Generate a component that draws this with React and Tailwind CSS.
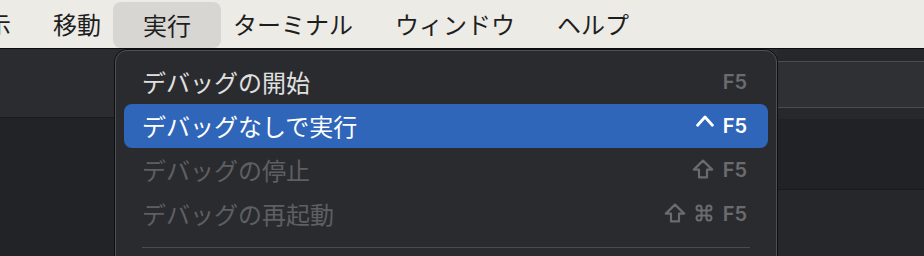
import React from 'react';

const FONT = { fontFamily: '"Noto Sans CJK JP", "Noto Sans", sans-serif' };

const BAR_ITEMS = ['表示', '移動', '実行', 'ターミナル', 'ウィンドウ', 'ヘルプ'];

const ShiftIcon = () => (
  <svg width="22" height="20" viewBox="0 0 22 20" fill="none" stroke="currentColor" strokeWidth="2.2" strokeLinejoin="round" className="mb-[3px]">
    <path d="M11 1.6 L20.2 10.6 H15 V18.4 H7 V10.6 H1.8 Z" />
  </svg>
);

const ControlIcon = () => (
  <svg width="18" height="12" viewBox="0 0 18 12" fill="none" stroke="currentColor" strokeWidth="2.8" strokeLinecap="round" strokeLinejoin="round" className="mb-[11px]">
    <polyline points="1.6,10.2 9,2 16.4,10.2" />
  </svg>
);

const CommandIcon = () => (
  <svg width="20" height="20" viewBox="0 0 24 24" fill="none" stroke="currentColor" strokeWidth="2.4" strokeLinecap="round" strokeLinejoin="round" className="mb-[3px]">
    <path d="M15 6v12a3 3 0 1 0 3-3H6a3 3 0 1 0 3 3V6a3 3 0 1 0-3 3h12a3 3 0 1 0-3-3" />
  </svg>
);

const ITEMS = [
  { label: 'デバッグの開始',     keys: [],               state: 'normal'   },
  { label: 'デバッグなしで実行', keys: ['ctrl'],         state: 'active'   },
  { label: 'デバッグの停止',     keys: ['shift'],        state: 'disabled' },
  { label: 'デバッグの再起動',   keys: ['shift', 'cmd'], state: 'disabled' },
];

const KeyGlyph = ({ k }) => {
  if (k === 'ctrl')  return <ControlIcon/>;
  if (k === 'shift') return <ShiftIcon/>;
  return <CommandIcon/>;
};

const MenuRow = ({ item }) => {
  const rowCls = item.state === 'active'
    ? 'bg-[#2f66b9] text-white'
    : item.state === 'disabled' ? 'text-[#5e5f62]' : 'text-[#e0e0e0]';
  const keyCls = item.state === 'active' ? 'text-white' : 'text-[#6a6b6e]';

  return (
    <div className={`h-[44px] rounded-[8px] pl-[18px] pr-[21px] flex items-center justify-between ${rowCls}`}>
      <span className="text-[24px] leading-none">{item.label}</span>
      <div className={`flex items-center gap-[8px] ${keyCls}`}>
        {item.keys.map(k => <KeyGlyph key={k} k={k}/>)}
        <span className="text-[20px] leading-none font-semibold ml-[1px]" style={{ fontFamily: 'Inter, "Noto Sans", sans-serif' }}>F5</span>
      </div>
    </div>
  );
};

export default function App() {
  return (
    <div className="relative w-[924px] h-[256px] overflow-hidden bg-[#212326]" style={FONT}>

      {/* menu bar */}
      <div className="h-[49px] bg-[#ecebe6] border-b border-[#0c0c0d] flex items-center ml-[-58px] text-[#1e1e1e]">
        {BAR_ITEMS.map(t => (
          <span
            key={t}
            className={t === '実行'
              ? 'h-[46px] mt-[1px] px-[30px] -mx-[9px] rounded-[8px] bg-[#d7d6d2] flex items-center text-[24px] leading-none'
              : 'h-[46px] px-[21px] flex items-center text-[24px] leading-none'}
          >
            {t}
          </span>
        ))}
      </div>

      {/* window behind */}
      <div className="flex h-[207px]">
        <div className="w-[777px] flex flex-col">
          <div className="h-[69px] bg-[#2b2c30] border-b border-[#1b1c1f]"/>
          <div className="flex-1 bg-[#212326]"/>
        </div>
        <div className="flex-1 flex flex-col">
          <div className="h-[13px] bg-[#26272b] border-b border-[#4b4c50]"/>
          <div className="h-[46px] bg-[#2f3034] border-b border-[#4b4c50]"/>
          <div className="h-[11px] bg-[#27282b]"/>
          <div className="h-[71px] bg-[#202225] border-b border-[#1a1b1d]"/>
          <div className="flex-1 bg-[#25272a]"/>
        </div>
      </div>

      {/* dropdown */}
      <div className="absolute left-[114px] top-[49px] w-[664px] h-[240px] rounded-[13px] border border-[#0e0e10]">
        <div className="h-full rounded-[12px] border border-[#505155] bg-[#2a2b2f] px-[8px] pt-[9px]">
          {ITEMS.map(item => <MenuRow key={item.label} item={item}/>)}
          <div className="mt-[11px] mx-[18px] h-px bg-[#4a4b4e]"/>
        </div>
      </div>
    </div>
  );
}
